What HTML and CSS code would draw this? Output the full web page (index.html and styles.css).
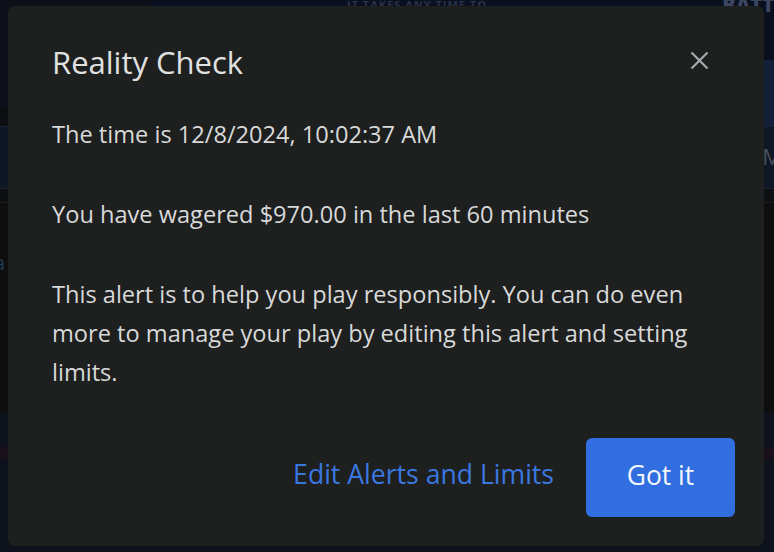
FILE: index.html
```html
<!DOCTYPE html>
<html lang="en">
<head>
<meta charset="utf-8">
<title>Reality Check</title>
<link rel="stylesheet" href="styles.css">
</head>
<body>
<div class="page">
  <div class="hero">
    <div class="hero-left"></div>
    <div class="hero-mid"><span class="hero-text">IT TAKES ANY TIME TO</span></div>
    <div class="hero-right">
      <div class="hero-img"><span class="hero-brand">BATT</span></div>
      <div class="hero-blue"></div>
    </div>
  </div>
  <div class="nav-row"><span class="nav-letter">M</span></div>
  <div class="sub-row"></div>
  <div class="content"><span class="content-letter">a</span></div>
  <div class="footer">
    <div class="footer-strip"></div>
  </div>
</div>

<div class="overlay">
  <div class="dialog" role="dialog" aria-labelledby="rc-title">
    <div class="dialog-head">
      <h2 id="rc-title" class="dialog-title">Reality Check</h2>
      <button class="close-btn" aria-label="Close">
        <svg width="19" height="19" viewBox="0 0 19 19" aria-hidden="true">
          <path d="M1.5 1.5 L17.5 17.5 M17.5 1.5 L1.5 17.5" stroke="#a7a9ac" stroke-width="2.2" fill="none"/>
        </svg>
      </button>
    </div>
    <div class="dialog-body">
      <p>The time is 12/8/2024, 10:02:37 AM</p>
      <p>You have wagered $970.00 in the last 60 minutes</p>
      <p>This alert is to help you play responsibly. You can do even more to manage your play by editing this alert and setting limits.</p>
    </div>
    <div class="dialog-actions">
      <a class="link-btn" href="#">Edit Alerts and Limits</a>
      <button class="primary-btn">Got it</button>
    </div>
  </div>
</div>
</body>
</html>
```

FILE: styles.css
```css
html, body {
  margin: 0;
  padding: 0;
}
body {
  width: 774px;
  height: 552px;
  overflow: hidden;
  background: #0d0e0f;
  font-family: "Open Sans", "Noto Sans", sans-serif;
  position: relative;
}

/* background page (dimmed) */
.page {
  display: flex;
  flex-direction: column;
  height: 552px;
}
.hero {
  display: flex;
  height: 126px;
  background: #0b0d12;
}
.hero-left {
  width: 150px;
  background: linear-gradient(#0d1018 0, #0d1018 108px, #0c0e12 108px);
}
.hero-mid {
  flex: 1;
  background: linear-gradient(#0b1020 0, #0b1020 108px, #0c0e12 108px);
  text-align: center;
  line-height: 6px;
}
.hero-text {
  color: #2a3246;
  font-size: 11px;
  font-weight: 700;
  letter-spacing: 1px;
}
.hero-right {
  width: 90px;
  display: flex;
  flex-direction: column;
}
.hero-img {
  height: 60px;
  background: #0a0f1e;
  line-height: 10px;
  text-align: right;
  overflow: hidden;
}
.hero-brand {
  color: #3c4660;
  font-size: 20px;
  font-weight: 800;
}
.hero-blue {
  flex: 1;
  background: #12203a;
}
.nav-row {
  height: 61px;
  background: #0f1626;
  border-top: 1px solid #1b2232;
  border-bottom: 1px solid #1b2232;
  text-align: right;
}
.nav-letter {
  display: inline-block;
  margin-top: 14px;
  margin-right: -8px;
  color: #4a4f58;
  font-size: 22px;
}
.sub-row {
  height: 13px;
  background: #0d0f13;
  border-bottom: 1px solid #1a1d22;
}
.content {
  flex: 1;
  background: #0e0e0e;
  padding-top: 46px;
}
.content-letter {
  color: #1d3e52;
  font-size: 20px;
  margin-left: -6px;
}
.footer {
  height: 139px;
  background: #0e121c;
  padding-top: 34px;
  box-sizing: border-box;
}
.footer-strip {
  height: 12px;
  background: #1a1019;
}

/* modal */
.overlay {
  position: absolute;
  inset: 0;
  display: flex;
  align-items: center;
  justify-content: center;
  padding-right: 2px;
}
.dialog {
  width: 756px;
  height: 540px;
  box-sizing: border-box;
  background: #1e1f1f;
  border-radius: 7px;
  padding: 36px 29px 29px 44px;
  display: flex;
  flex-direction: column;
  color: #d8d9d9;
}
.dialog-head {
  display: flex;
  align-items: flex-start;
  justify-content: space-between;
  padding-right: 26px;
}
.dialog-title {
  margin: 0;
  font-weight: 400;
  font-size: 31px;
  line-height: 40px;
  color: #e0e1e1;
}
.close-btn {
  background: none;
  border: 0;
  padding: 0;
  margin-top: 9px;
  width: 19px;
  height: 19px;
  display: block;
  cursor: pointer;
}
.close-btn svg {
  display: block;
}
.dialog-body {
  flex: 1;
  margin-top: 33px;
  padding-right: 30px;
}
.dialog-body p {
  margin: 0 0 41px;
  font-size: 23.6px;
  line-height: 39px;
  color: #d8d9d9;
}
.dialog-actions {
  display: flex;
  align-items: center;
  justify-content: flex-end;
  gap: 32px;
}
.link-btn {
  color: #3a78e0;
  font-size: 26.6px;
  text-decoration: none;
  margin-bottom: 7px;
}
.primary-btn {
  width: 149px;
  height: 79px;
  box-sizing: border-box;
  border: 0;
  border-radius: 6px;
  padding: 0 0 6px;
  background: #316fe0;
  color: #f4f6fa;
  font-family: inherit;
  font-size: 26.4px;
  cursor: pointer;
}
```
